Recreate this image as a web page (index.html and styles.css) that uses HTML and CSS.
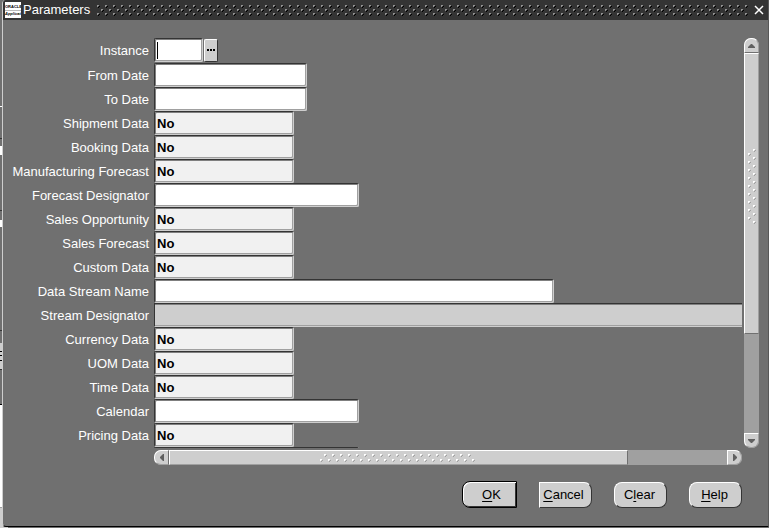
FILE: index.html
```html
<!DOCTYPE html>
<html lang="en">

<head>
  <title>Parameters</title>
  <meta charset="utf-8">
  <link rel="stylesheet" href="styles.css">
</head>

<body>
  <div class="window">
    <header class="titlebar">
      <svg class="logo" width="16" height="16" viewBox="0 0 16 16">
        <rect width="16" height="16" fill="#fff" />
        <text class="logo-text" x="0" y="6">ORACLE</text>
        <path d="M0 8.5H16" stroke="#bbb" />
        <text class="logo-text logo-sub" x="0" y="13">Applicat</text>
      </svg>
      <h1>Parameters</h1>
      <svg class="grip">
        <defs>
          <pattern id="title-dots" width="8" height="8" patternUnits="userSpaceOnUse">
            <path d="M1 0h2v1h-1v1h-1zM5 4h2v1h-1v1h-1z" fill="#949494" />
            <path d="M3 1h1v1h-1v1h-1v-1h1zM7 5h1v1h-1v1h-1v-1h1z" fill="#000" />
          </pattern>
        </defs>
        <rect width="100%" height="11" fill="url(#title-dots)" />
      </svg>
      <button class="close" aria-label="Close">
        <svg width="10" height="10" viewBox="0 0 10 10">
          <path d="M1 1L9 9M9 1L1 9" stroke="#fff" stroke-width="1.5" />
        </svg>
      </button>
    </header>

    <main class="content">
      <form class="fields">
        <div class="row first">
          <label for="instance">Instance</label>
          <input id="instance" class="field tiny current" type="text">
          <button type="button" class="lov" aria-label="List of Values">
            <svg width="8" height="2" viewBox="0 0 8 2">
              <path d="M0 0h2v2h-2zM3 0h2v2h-2zM6 0h2v2h-2z" />
            </svg>
          </button>
        </div>
        <div class="row">
          <label for="from-date">From Date</label>
          <input id="from-date" class="field date" type="text">
        </div>
        <div class="row">
          <label for="to-date">To Date</label>
          <input id="to-date" class="field date" type="text">
        </div>
        <div class="row">
          <label for="shipment">Shipment Data</label>
          <input id="shipment" class="field choice" type="text" value="No">
        </div>
        <div class="row">
          <label for="booking">Booking Data</label>
          <input id="booking" class="field choice" type="text" value="No">
        </div>
        <div class="row">
          <label for="mfg-forecast">Manufacturing Forecast</label>
          <input id="mfg-forecast" class="field choice" type="text" value="No">
        </div>
        <div class="row">
          <label for="forecast-designator">Forecast Designator</label>
          <input id="forecast-designator" class="field medium" type="text">
        </div>
        <div class="row">
          <label for="sales-opportunity">Sales Opportunity</label>
          <input id="sales-opportunity" class="field choice" type="text" value="No">
        </div>
        <div class="row">
          <label for="sales-forecast">Sales Forecast</label>
          <input id="sales-forecast" class="field choice" type="text" value="No">
        </div>
        <div class="row">
          <label for="custom">Custom Data</label>
          <input id="custom" class="field choice" type="text" value="No">
        </div>
        <div class="row">
          <label for="stream-name">Data Stream Name</label>
          <input id="stream-name" class="field wide" type="text">
        </div>
        <div class="row">
          <label for="stream-designator">Stream Designator</label>
          <input id="stream-designator" class="field full" type="text" disabled>
        </div>
        <div class="row">
          <label for="currency">Currency Data</label>
          <input id="currency" class="field choice" type="text" value="No">
        </div>
        <div class="row">
          <label for="uom">UOM Data</label>
          <input id="uom" class="field choice" type="text" value="No">
        </div>
        <div class="row">
          <label for="time">Time Data</label>
          <input id="time" class="field choice" type="text" value="No">
        </div>
        <div class="row">
          <label for="calendar">Calendar</label>
          <input id="calendar" class="field medium" type="text">
        </div>
        <div class="row">
          <label for="pricing">Pricing Data</label>
          <input id="pricing" class="field choice" type="text" value="No">
        </div>
        <!-- scrolled mostly out of view -->
        <div class="row">
          <label></label>
          <input class="field medium" type="text" aria-label="Next parameter">
        </div>
      </form>

      <div class="scroll vertical">
        <button class="arrow up" aria-label="Scroll up">
          <svg width="7" height="4" viewBox="0 0 7 4"><path d="M3 0h1l3 3v1h-7v-1z" /></svg>
        </button>
        <div class="thumb">
          <svg width="8" height="76">
            <defs>
              <pattern id="v-dots" width="8" height="8" patternUnits="userSpaceOnUse">
                <path d="M5 0h2v1h-1v1h-1zM0 4h2v1h-1v1h-1z" fill="#fff" />
                <path d="M7 1h1v1h-1v1h-1v-1h1zM2 5h1v1h-1v1h-1v-1h1z" fill="#a0a0a0" />
              </pattern>
            </defs>
            <rect width="8" height="76" fill="url(#v-dots)" />
          </svg>
        </div>
        <button class="arrow down" aria-label="Scroll down">
          <svg width="7" height="4" viewBox="0 0 7 4"><path d="M0 0h7v1l-3 3h-1l-3-3z" /></svg>
        </button>
      </div>

      <div class="scroll horizontal">
        <button class="arrow left" aria-label="Scroll left">
          <svg width="4" height="7" viewBox="0 0 4 7"><path d="M4 0v7h-1l-3-3v-1l3-3z" /></svg>
        </button>
        <div class="thumb">
          <svg width="156" height="8">
            <defs>
              <pattern id="h-dots" width="8" height="8" patternUnits="userSpaceOnUse">
                <path d="M4 0h2v1h-1v1h-1zM0 5h2v1h-1v1h-1z" fill="#fff" />
                <path d="M6 1h1v1h-1v1h-1v-1h1zM2 6h1v1h-1v1h-1v-1h1z" fill="#a0a0a0" />
              </pattern>
            </defs>
            <rect width="156" height="8" fill="url(#h-dots)" />
          </svg>
        </div>
        <button class="arrow right" aria-label="Scroll right">
          <svg width="4" height="7" viewBox="0 0 4 7"><path d="M0 0h1l3 3v1l-3 3h-1z" /></svg>
        </button>
      </div>
    </main>

    <footer class="actions">
      <button class="btn ok"><u>O</u>K</button>
      <button class="btn cancel"><u>C</u>ancel</button>
      <button class="btn">C<u>l</u>ear</button>
      <button class="btn"><u>H</u>elp</button>
    </footer>
  </div>
</body>

</html>
```

FILE: styles.css
```css
:root {
  --canvas: #707070;
  --title: #343434;
  --face: #cecece;
  --track: #a0a0a0;
  --light: #ffffff;
  --dark: #343434;
}

* {
  box-sizing: border-box;
}

/* the strip at the left is the form behind the dialog */
body {
  margin: 0;
  height: 100vh;
  padding: 0 0 1px 2px;
  overflow: hidden;
  font-family: "Liberation Sans", Arial, Helvetica, sans-serif;
  font-size: 13px;
  line-height: 16px;
  color: #fff;
  background: linear-gradient(#707070 0 106px, #fff 106px 107px, #707070 107px 138px,
      #343434 138px 139px, #707070 139px 146px, #fff 146px 155px, #707070 155px 210px,
      #343434 210px 211px, #707070 211px 220px, #fff 220px 227px, #707070 227px 330px,
      #343434 330px 331px, #707070 331px 343px, #cecece 343px 351px, #000 351px 352px,
      #cecece 352px 355px, #000 355px 356px, #cecece 356px 360px, #000 360px 361px,
      #cecece 361px 369px, #343434 369px 370px, #707070 370px 404px, #000 404px 405px,
      #fff 405px 507px, #a0a0a0 507px 508px, #cecece 508px) left top / 8px 100% no-repeat,
    #707070;
}

button,
input {
  font: inherit;
  margin: 0;
  padding: 0;
  border: 0;
  border-radius: 0;
}

svg {
  display: block;
}

.window {
  height: 100%;
  display: flex;
  flex-direction: column;
  background: var(--canvas);
  border-left: 1px solid var(--face);
  border-right: 1px solid #585858;
  border-bottom: 1px solid #000;
  border-radius: 4px 0 0 4px;
  overflow: hidden;
}

/* --- Title bar --- */
.titlebar {
  display: flex;
  align-items: center;
  height: 20px;
  padding: 0 4px 0 2px;
  background: var(--title);
}

.titlebar h1 {
  margin: 0 6px 0 2px;
  font-size: 13px;
  font-weight: normal;
}

.logo-text {
  font-size: 4px;
  font-weight: bold;
  fill: #000;
}

.logo-sub {
  font-style: italic;
}

.grip {
  flex: 1;
  min-width: 0;
  height: 11px;
}

.close {
  margin-left: 6px;
  background: none;
}

/* --- Parameter form --- */
.content {
  flex: 1;
  min-height: 0;
  display: grid;
  grid-template-columns: 1fr 15px;
  grid-template-rows: 1fr 15px;
  gap: 2px;
  padding: 18px 9px 0 0;
}

.fields {
  min-width: 0;
  min-height: 0;
  overflow: hidden;
}

.row {
  display: flex;
  align-items: center;
  height: 24px;
}

.row.first {
  margin-bottom: 1px;
}

.row label {
  flex: none;
  width: 146px;
  margin-right: 5px;
  padding-top: 2px;
  text-align: right;
  white-space: nowrap;
}

.field {
  height: 24px;
  padding: 0 2px;
  color: #000;
  background: #fff;
  border: 1px solid;
  border-color: var(--dark) var(--face) var(--face) var(--dark);
  border-radius: 2px;
  box-shadow: inset 1px 1px #808080, inset -1px -1px var(--track);
  outline: none;
}

.tiny {
  width: 49px;
}

.date {
  width: 153px;
}

.choice {
  width: 140px;
  font-weight: bold;
  background: #f1f1f1;
}

.medium {
  width: 205px;
}

.wide {
  width: 400px;
}

.full {
  flex: 1;
  min-width: 0;
  background: var(--face);
  border-right: 0;
  border-radius: 0;
  box-shadow: inset 0 1px #808080, inset 0 -1px var(--track);
}

/* insertion point */
.current {
  background: linear-gradient(#000, #000) 2px 3px / 1px 17px no-repeat #fff;
}

.lov {
  display: flex;
  align-items: center;
  justify-content: center;
  width: 14px;
  height: 23px;
  margin-left: 1px;
  background: var(--face);
  border: 1px solid;
  border-color: var(--light) var(--dark) var(--dark) var(--light);
  border-radius: 2px;
}

/* --- Scroll bars --- */
.scroll {
  display: flex;
  background: var(--track);
}

.vertical {
  flex-direction: column;
  border-radius: 7px;
}

.horizontal {
  margin-left: 151px;
  border-radius: 7px;
}

.arrow {
  flex: none;
  display: flex;
  align-items: center;
  justify-content: center;
  width: 15px;
  height: 15px;
  background: var(--face);
  border: 1px solid var(--light);
}

.arrow path {
  fill: #606060;
}

.up {
  border-radius: 7px 7px 0 0;
  border-right-color: var(--track);
  border-bottom-color: var(--canvas);
}

.down {
  margin-top: auto;
  border-radius: 0 0 7px 7px;
  border-right-color: var(--track);
  border-bottom-color: var(--track);
}

.left {
  border-radius: 7px 0 0 7px;
  border-right-color: var(--canvas);
  border-bottom-color: var(--track);
}

.right {
  margin-left: auto;
  border-radius: 0 7px 7px 0;
  border-right-color: var(--track);
  border-bottom-color: var(--track);
}

.thumb {
  display: flex;
  align-items: center;
  justify-content: center;
  background: var(--face);
  border: 1px solid var(--light);
}

.vertical .thumb {
  height: 74%;
  max-height: calc(100% - 129px);
  padding-bottom: 14px;
  border-right-color: var(--track);
  border-bottom-color: var(--canvas);
}

.horizontal .thumb {
  width: 78%;
  border-right-color: var(--canvas);
  border-bottom-color: var(--track);
}

/* --- Buttons --- */
.actions {
  display: flex;
  align-items: center;
  justify-content: flex-end;
  gap: 22px;
  padding: 16px 26px 18px;
}

.btn {
  width: 53px;
  height: 26px;
  padding-right: 2px;
  color: #000;
  background: var(--face);
  border: 1px solid;
  border-color: var(--light) var(--dark) var(--dark) var(--light);
  border-radius: 8px;
}

.btn u {
  text-underline-offset: 2px;
}

.ok {
  width: 55px;
  height: 27px;
  padding: 0 0 0 4px;
  border: 1px solid #000;
  border-radius: 8px 0 0 8px;
  box-shadow: inset 1px 1px var(--light), inset -1px -1px var(--dark);
}

.cancel {
  padding-right: 4px;
  border-radius: 0 8px 8px 0;
}
```
